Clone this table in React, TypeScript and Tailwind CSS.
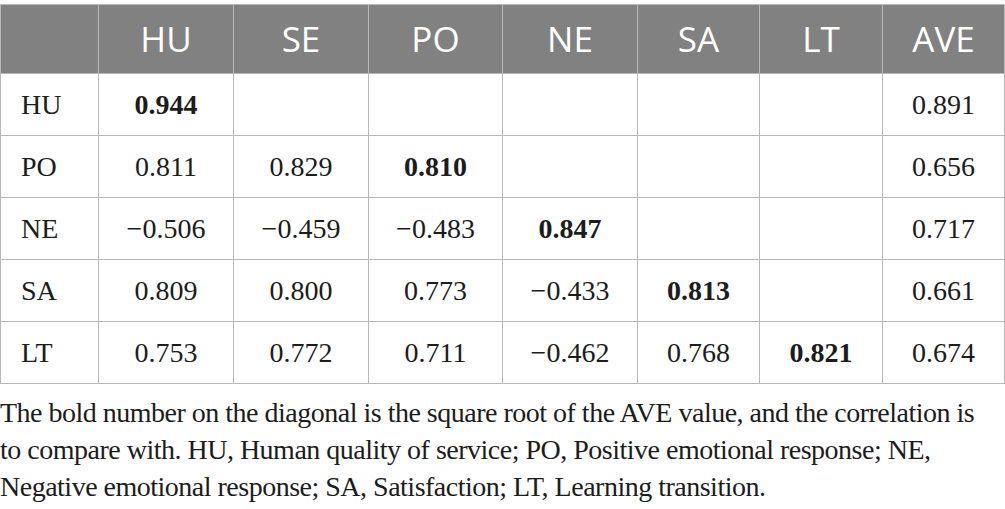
import React from 'react';

type Cell = { v: string; bold?: boolean } | null;

const headers = ['HU', 'SE', 'PO', 'NE', 'SA', 'LT', 'AVE'];

const rows: { label: string; cells: Cell[] }[] = [
  { label: 'HU', cells: [{ v: '0.944', bold: true }, null, null, null, null, null, { v: '0.891' }] },
  { label: 'PO', cells: [{ v: '0.811' }, { v: '0.829' }, { v: '0.810', bold: true }, null, null, null, { v: '0.656' }] },
  { label: 'NE', cells: [{ v: '\u22120.506' }, { v: '\u22120.459' }, { v: '\u22120.483' }, { v: '0.847', bold: true }, null, null, { v: '0.717' }] },
  { label: 'SA', cells: [{ v: '0.809' }, { v: '0.800' }, { v: '0.773' }, { v: '\u22120.433' }, { v: '0.813', bold: true }, null, { v: '0.661' }] },
  { label: 'LT', cells: [{ v: '0.753' }, { v: '0.772' }, { v: '0.711' }, { v: '\u22120.462' }, { v: '0.768' }, { v: '0.821', bold: true }, { v: '0.674' }] },
];

const colWidths = ['w-[98px]', 'w-[135px]', 'w-[135px]', 'w-[134px]', 'w-[135px]', 'w-[122px]', 'w-[123px]', 'w-[122px]'];

const App: React.FC = () => {
  return (
    <div className="w-[1005px] h-[509px] bg-white pt-1 overflow-hidden">
      <table className="w-[1004px] table-fixed border-collapse">
        <colgroup>
          {colWidths.map((w, i) => (
            <col key={i} className={w} />
          ))}
        </colgroup>
        <thead>
          <tr className="h-[69px] bg-[#808180]">
            <th className="border border-[#b8b8b8]" />
            {headers.map(h => (
              <th
                key={h}
                className="border border-[#b8b8b8] text-center text-white font-normal text-[35px] font-['Open_Sans',sans-serif]"
              >
                {h}
              </th>
            ))}
          </tr>
        </thead>
        <tbody className="font-['Liberation_Serif',serif] text-[28px] text-[#1c1c1c]">
          {rows.map(row => (
            <tr key={row.label} className="h-[62px]">
              <td className="border border-[#b8b8b8] pl-5 text-left">{row.label}</td>
              {row.cells.map((c, i) => (
                <td key={i} className={`border border-[#b8b8b8] text-center ${c?.bold ? 'font-bold' : ''}`}>
                  {c ? c.v : ''}
                </td>
              ))}
            </tr>
          ))}
        </tbody>
      </table>
      <p className="mt-[10px] font-['Liberation_Serif',serif] text-[28px] leading-[37px] text-[#1c1c1c] tracking-[-0.5px] whitespace-nowrap">
        The bold number on the diagonal is the square root of the AVE value, and the correlation is
        <br />
        to compare with. HU, Human quality of service; PO, Positive emotional response; NE,
        <br />
        Negative emotional response; SA, Satisfaction; LT, Learning transition.
      </p>
    </div>
  );
};

export default App;
